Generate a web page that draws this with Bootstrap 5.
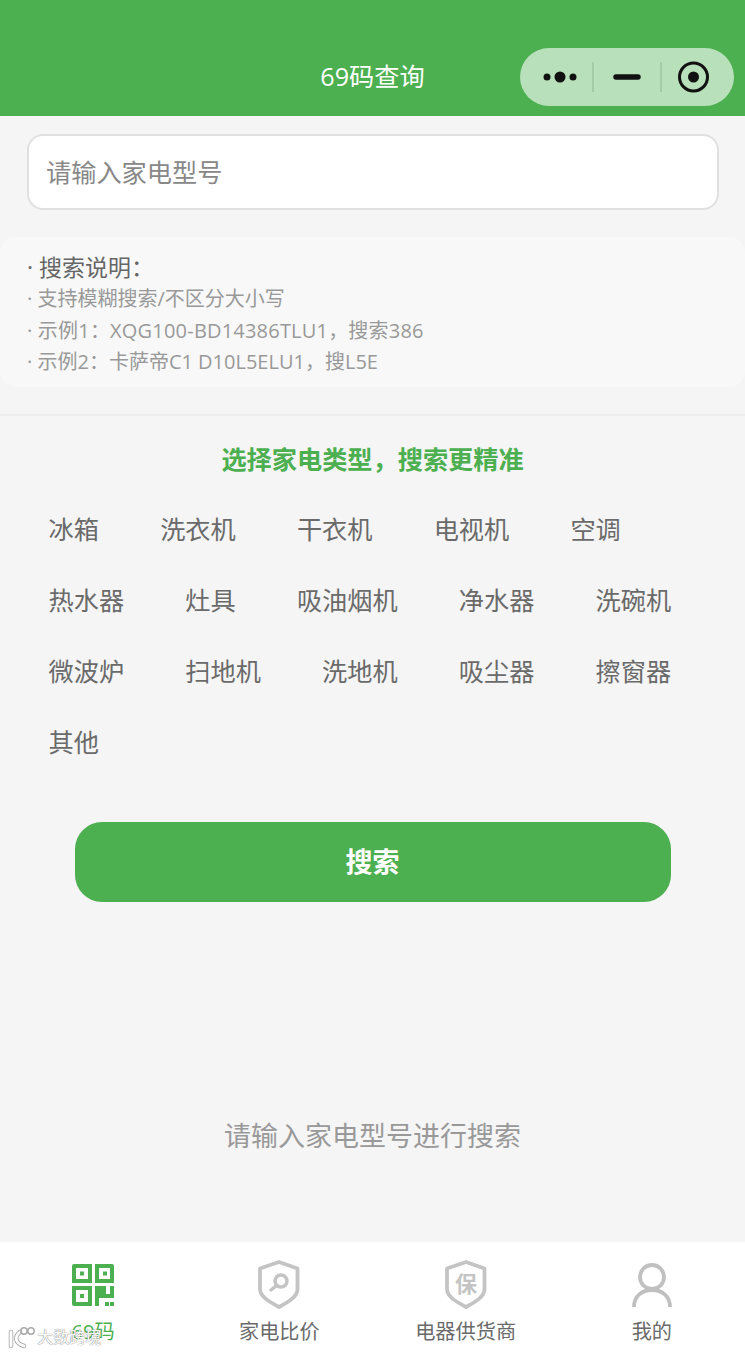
<!DOCTYPE html>
<html lang="zh">
<head>
  <meta charset="UTF-8" />
  <title>69码查询</title>
  <meta name="viewport" content="width=device-width, initial-scale=1" />
  <link href="https://cdn.jsdelivr.net/npm/bootstrap@5.3.0/dist/css/bootstrap.min.css" rel="stylesheet" />
  <style>
    html, body { height: 100%; }
    body { background: #f5f5f5; overflow: hidden; font-family: "Open Sans", "Noto Sans CJK SC", sans-serif; }
    .app-shell { height: 1353px; position: relative; }
    .top-bar { height: 116px; background: #4caf50; position: relative; color: #fff; font-size: 25.2px; padding-top: 57px; line-height: 38px; text-align: center; }
    .capsule { position: absolute; left: 520px; top: 48px; width: 214px; height: 58px; border-radius: 29px; background: #b8e0ba; }
    .search-wrap { padding: 18px 26px 0 27px; }
    .search-input { height: 76px; border: 2px solid #e0e0e0; border-radius: 16px; font-size: 25.2px; padding: 0 18px 0 17px; background: #fff; color: #333; }
    .search-input::placeholder { color: #888; }
    .tips-box { margin-top: 27px; height: 150px; background: #f8f8f8; border-radius: 16px; padding: 15px 27px; color: #999; font-size: 20px; line-height: 31.5px; }
    .tips-head { color: #666; font-size: 23px; line-height: 31px; }
    .tips-long { letter-spacing: .2px; }
    .rule-line { margin-top: 27px; border-top: 2px solid #eee; }
    .type-title { margin-top: 24px; color: #4caf50; font-size: 25.2px; font-weight: 700; line-height: 38px; text-align: center; }
    .type-list { padding: 32px 40px 0 48.6px; column-gap: 61.2px; row-gap: 33px; }
    .type-item { color: #6a6a6a; font-size: 25.2px; line-height: 38px; }
    .search-btn { display: block; margin: 61px auto 0; width: 596px; height: 80px; background: #4caf50; border: 0; border-radius: 27px; color: #fff; font-size: 27px; font-weight: 700; }
    .search-btn:hover { background: #4caf50; color: #fff; }
    .empty-text { margin-top: 213px; color: #999; font-size: 27px; line-height: 42px; text-align: center; }
    .tab-bar { position: absolute; left: 0; right: 0; bottom: 0; height: 111px; background: #fff; }
    .tab-cell { width: 25%; color: #6a6a6a; font-size: 20.2px; line-height: 30px; padding-top: 17px; }
    .tab-cell.is-on { color: #4caf50; }
    .tab-cell svg { display: block; margin: 0 auto 7px; width: 48px; height: 50px; }
    .water-mark { position: absolute; left: 7px; bottom: 4px; color: #fff; font-size: 16px; line-height: 24px; text-shadow: 0 0 1px #888, 0 0 1px #888; }
    .water-mark svg { width: 28px; height: 24px; margin-right: -2px; vertical-align: top; }
  </style>
</head>
<body>
  <div class="app-shell">
    <div class="top-bar">
      69码查询
      <div class="capsule">
        <svg width="214" height="58" viewBox="0 0 214 58">
          <circle cx="27" cy="29" r="3.5" fill="#111"/><circle cx="40" cy="29" r="5.5" fill="#111"/><circle cx="53" cy="29" r="3.5" fill="#111"/>
          <path d="M73 14V44M141 14V44" stroke="#9cc49e" stroke-width="1.5"/>
          <path d="M96 29H118" stroke="#111" stroke-width="5.5" stroke-linecap="round"/>
          <circle cx="173.500" cy="29" r="14" fill="none" stroke="#111" stroke-width="3"/><circle cx="173.500" cy="29" r="5.5" fill="#111"/>
        </svg>
      </div>
    </div>

    <div class="search-wrap">
      <input class="form-control search-input" type="text" placeholder="请输入家电型号" />
    </div>

    <div class="tips-box">
      <div class="tips-head">· 搜索说明：</div>
      <div>· 支持模糊搜索/不区分大小写</div>
      <div class="tips-long">· 示例1：XQG100-BD14386TLU1，搜索386</div>
      <div>· 示例2：卡萨帝C1 D10L5ELU1，搜L5E</div>
    </div>

    <div class="rule-line"></div>
    <div class="type-title">选择家电类型，搜索更精准</div>

    <div class="type-list d-flex flex-wrap">
      <span class="type-item">冰箱</span><span class="type-item">洗衣机</span><span class="type-item">干衣机</span><span class="type-item">电视机</span><span class="type-item">空调</span>
      <span class="type-item">热水器</span><span class="type-item">灶具</span><span class="type-item">吸油烟机</span><span class="type-item">净水器</span><span class="type-item">洗碗机</span>
      <span class="type-item">微波炉</span><span class="type-item">扫地机</span><span class="type-item">洗地机</span><span class="type-item">吸尘器</span><span class="type-item">擦窗器</span>
      <span class="type-item">其他</span>
    </div>

    <button class="btn search-btn" type="button">搜索</button>
    <div class="empty-text">请输入家电型号进行搜索</div>

    <div class="tab-bar d-flex text-center">
      <div class="tab-cell is-on">
        <svg viewBox="0 0 48 50" fill="#4caf50">
          <path fill-rule="evenodd" d="M3 7a2 2 0 0 1 2-2h18v19H3zM7 9v11h12V9zM26 5h17a2 2 0 0 1 2 2v17H26zM30 9v11h11V9zM3 27h20v20H5a2 2 0 0 1-2-2zM7 31v12h12V31z"/>
          <path d="M11 12.500h4v4h-4zM34 12.500h4v4h-4zM11 35h4v4h-4z"/>
          <path d="M26 27h11v8h4v-8h4v12H30v8h-4zM36 43h4v4h-4zM41 43h4v4h-4z"/>
        </svg>
        69码
      </div>
      <div class="tab-cell">
        <svg viewBox="0 0 48 50" fill="none" stroke="#c4c4c4">
          <path d="M24 3L42.500 9.500V30C42.500 38 33 43 24 48C15 43 5 38 5 30V9.500Z" stroke-width="3.800" stroke-linejoin="round"/>
          <circle cx="26" cy="22" r="6" stroke-width="3.500"/><path d="M21 27L16 31" stroke-width="3.500" stroke-linecap="round"/>
        </svg>
        家电比价
      </div>
      <div class="tab-cell">
        <svg viewBox="0 0 48 50" fill="none" stroke="#c4c4c4">
          <path d="M24 3L42.500 9.500V30C42.500 38 33 43 24 48C15 43 5 38 5 30V9.500Z" stroke-width="3.800" stroke-linejoin="round"/>
          <text x="24" y="33" font-size="22" font-weight="700" fill="#c4c4c4" stroke="none" text-anchor="middle" font-family="Noto Sans CJK SC">保</text>
        </svg>
        电器供货商
      </div>
      <div class="tab-cell">
        <svg viewBox="0 0 48 50" fill="none" stroke="#c0c0c0" stroke-width="3.800">
          <circle cx="24" cy="18" r="12"/><path d="M6 48C6 37 14 31 24 31C34 31 42 37 42 48"/>
        </svg>
        我的
      </div>
    </div>

    <div class="water-mark">
      <svg viewBox="0 0 28 24" fill="none" stroke-linecap="round">
        <g stroke="#aaa" stroke-width="4.500"><path d="M4 7V21M13 7C7 12 8 18 17 21"/></g>
        <g stroke="#fff" stroke-width="2.800"><path d="M4 7V21M13 7C7 12 8 18 17 21"/></g>
        <circle cx="17" cy="6" r="3.200" stroke="#aaa" stroke-width="1.500"/><circle cx="24" cy="6" r="3.200" stroke="#aaa" stroke-width="1.500"/>
      </svg>
      大数跨境
    </div>
  </div>
  <script src="https://cdn.jsdelivr.net/npm/bootstrap@5.3.0/dist/js/bootstrap.bundle.min.js"></script>
</body>
</html>
